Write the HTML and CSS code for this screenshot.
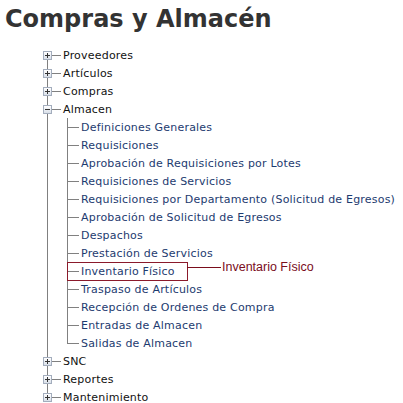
FILE: index.html
```html
<!DOCTYPE html>
<html lang="es">
<head>
    <meta charset="UTF-8">
    <title>Compras y Almacén</title>
    <link rel="stylesheet" href="styles.css">
</head>
<body>
    <h1 class="title">Compras y Almacén</h1>

    <ul class="tree">
        <li class="node">
            <div class="row"><span class="toggle plus"></span><span class="dash"></span><span class="label">Proveedores</span></div>
        </li>
        <li class="node">
            <div class="row"><span class="toggle plus"></span><span class="dash"></span><span class="label">Artículos</span></div>
        </li>
        <li class="node">
            <div class="row"><span class="toggle plus"></span><span class="dash"></span><span class="label">Compras</span></div>
        </li>
        <li class="node">
            <div class="row"><span class="toggle"></span><span class="dash"></span><span class="label">Almacen</span></div>
            <ul class="children">
                <li class="leaf"><a href="#">Definiciones Generales</a></li>
                <li class="leaf"><a href="#">Requisiciones</a></li>
                <li class="leaf"><a href="#">Aprobación de Requisiciones por Lotes</a></li>
                <li class="leaf"><a href="#">Requisiciones de Servicios</a></li>
                <li class="leaf"><a href="#">Requisiciones por Departamento (Solicitud de Egresos)</a></li>
                <li class="leaf"><a href="#">Aprobación de Solicitud de Egresos</a></li>
                <li class="leaf"><a href="#">Despachos</a></li>
                <li class="leaf"><a href="#">Prestación de Servicios</a></li>
                <li class="leaf marked">
                    <a href="#">Inventario Físico</a>
                    <span class="callout"><span class="callout-label">Inventario Físico</span></span>
                </li>
                <li class="leaf"><a href="#">Traspaso de Artículos</a></li>
                <li class="leaf"><a href="#">Recepción de Ordenes de Compra</a></li>
                <li class="leaf"><a href="#">Entradas de Almacen</a></li>
                <li class="leaf"><a href="#">Salidas de Almacen</a></li>
            </ul>
        </li>
        <li class="node">
            <div class="row"><span class="toggle plus"></span><span class="dash"></span><span class="label">SNC</span></div>
        </li>
        <li class="node">
            <div class="row"><span class="toggle plus"></span><span class="dash"></span><span class="label">Reportes</span></div>
        </li>
        <li class="node">
            <div class="row"><span class="toggle plus"></span><span class="dash"></span><span class="label">Mantenimiento</span></div>
        </li>
    </ul>
</body>
</html>
```

FILE: styles.css
```css
body {
    margin: 0;
    background-color: #fff;
    font-family: "DejaVu Sans", Verdana, sans-serif;
    overflow: hidden;
}

.title {
    margin: 5px 0 0 5px;
    font-size: 24px;
    line-height: 28px;
    font-weight: bold;
    color: #333;
}

/* tree */

.tree {
    position: relative;
    list-style: none;
    margin: 13px 0 0;
    padding: 0 0 0 43px;
    font-size: 11px;
}

.tree::before {
    content: "";
    position: absolute;
    left: 47px;
    top: 9px;
    bottom: 9px;
    border-left: 1px solid #808080;
}

.row {
    display: flex;
    align-items: center;
    height: 18px;
}

/* expander box, plus/minus drawn with pseudo elements */
.toggle {
    position: relative;
    width: 9px;
    height: 9px;
    box-sizing: border-box;
    border: 1px solid #a3adbd;
    background: linear-gradient(#ffffff, #d9dfe8);
}

.toggle::before {
    content: "";
    position: absolute;
    left: 1px;
    top: 3px;
    width: 5px;
    height: 1px;
    background: #333;
}

.toggle.plus::after {
    content: "";
    position: absolute;
    left: 3px;
    top: 1px;
    width: 1px;
    height: 5px;
    background: #333;
}

.dash {
    width: 9px;
    border-top: 1px solid #808080;
    margin-right: 2px;
}

.label {
    color: #111;
    letter-spacing: 0.2px;
}

.children {
    position: relative;
    list-style: none;
    margin: 0;
    padding: 0 0 0 24px;
}

.children::before {
    content: "";
    position: absolute;
    left: 24px;
    top: 0;
    bottom: 9px;
    border-left: 1px solid #808080;
}

.leaf {
    position: relative;
    display: flex;
    align-items: center;
    height: 18px;
}

.leaf::before {
    content: "";
    width: 12px;
    border-top: 1px solid #808080;
    margin-right: 2px;
}

.leaf a {
    color: #1d3b6f;
    text-decoration: none;
    letter-spacing: 0.2px;
}

/* annotation */

.callout {
    position: absolute;
    left: 0;
    top: 0;
    width: 121px;
    height: 19px;
    box-sizing: border-box;
    border: 1px solid #8b1a2b;
}

.callout-label {
    position: absolute;
    left: 100%;
    top: -3px;
    display: flex;
    align-items: center;
    font-family: "Liberation Sans", Arial, sans-serif;
    font-size: 12.5px;
    color: #7a0d1c;
    white-space: nowrap;
}

.callout-label::before {
    content: "";
    width: 34px;
    border-top: 1px solid #7a0d1c;
    margin-right: 1px;
}
```
